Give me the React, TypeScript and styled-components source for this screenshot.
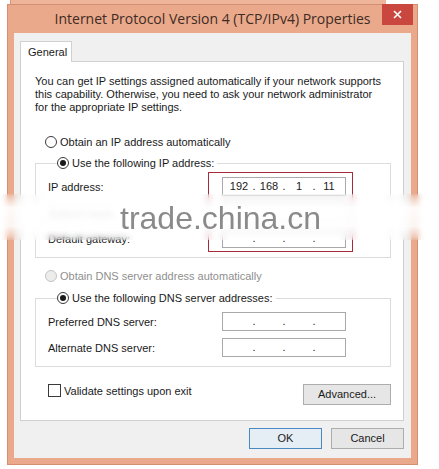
import styled, { createGlobalStyle } from "styled-components";

const GlobalStyle = createGlobalStyle`
  html, body {
    margin: 0;
    padding: 0;
    background: #ffffff;
  }
  body {
    font-family: "Liberation Sans", Arial, sans-serif;
    font-size: 11px;
    color: #1a1a1a;
  }
`;

type IpProps = {
  values?: string[];
};

const IpField: React.FC<IpProps> = ({ values = ["", "", "", ""] }) => {
  return (
    <Field>
      {values.map((v, i) => (
        <Segment key={`seg-${i}`}>
          <Octet>{v}</Octet>
          {i < 3 && <Dot>.</Dot>}
        </Segment>
      ))}
    </Field>
  );
};

type RadioProps = {
  checked?: boolean;
  disabled?: boolean;
  label: string;
};

const Radio: React.FC<RadioProps> = ({ checked, disabled, label }) => (
  <RadioRow $disabled={disabled}>
    <Circle $checked={checked} $disabled={disabled} />
    <span>{label}</span>
  </RadioRow>
);

const App = () => {
  return (
    <Page>
      <GlobalStyle />
      <BackWindow />
      <Window>
        <TitleBar>
          <span />
          <Title>Internet Protocol Version 4 (TCP/IPv4) Properties</Title>
          <CloseButton>
            <svg width="9" height="9" viewBox="0 0 9 9">
              <path d="M1 1 L8 8 M8 1 L1 8" stroke="#fff" strokeWidth="1.6" />
            </svg>
          </CloseButton>
        </TitleBar>

        <Client>
          <Tab>General</Tab>
          <Panel>
            <Description>
              You can get IP settings assigned automatically if your network supports
              <br />
              this capability. Otherwise, you need to ask your network administrator
              <br />
              for the appropriate IP settings.
            </Description>

            <AutoRow>
              <Radio label="Obtain an IP address automatically" />
            </AutoRow>

            <Group $top={5}>
              <Legend>
                <Radio checked label="Use the following IP address:" />
              </Legend>
              <FieldRow>
                <Label>IP address:</Label>
                <IpField values={["192", "168", "1", "11"]} />
              </FieldRow>
              <FieldRow>
                <Label>Subnet mask:</Label>
                <IpField />
              </FieldRow>
              <FieldRow>
                <Label>Default gateway:</Label>
                <IpField />
              </FieldRow>
            </Group>

            <AutoRow $top={10}>
              <Radio disabled label="Obtain DNS server address automatically" />
            </AutoRow>

            <Group $top={6}>
              <Legend>
                <Radio checked label="Use the following DNS server addresses:" />
              </Legend>
              <FieldRow>
                <Label>Preferred DNS server:</Label>
                <IpField />
              </FieldRow>
              <FieldRow>
                <Label>Alternate DNS server:</Label>
                <IpField />
              </FieldRow>
            </Group>

            <BottomRow>
              <CheckRow>
                <CheckBox />
                <span>Validate settings upon exit</span>
              </CheckRow>
              <Button $width={88}>Advanced...</Button>
            </BottomRow>
          </Panel>

          <Footer>
            <Button $width={73} $primary>
              OK
            </Button>
            <Button $width={73}>Cancel</Button>
          </Footer>
        </Client>
      </Window>

      <Highlight />
      <WatermarkBand />
      <Watermark>trade.china.cn</Watermark>
    </Page>
  );
};

export default App;

const Page = styled.div`
  position: relative;
  width: 439px;
  height: 469px;
  overflow: hidden;
`;

const BackWindow = styled.div`
  margin-left: 10px;
  width: 376px;
  height: 4px;
  box-sizing: border-box;
  background: #eeb59b;
  border-left: 1px solid #d8987b;
`;

const Window = styled.div`
  margin-left: 7px;
  width: 411px;
  height: 461px;
  box-sizing: border-box;
  display: flex;
  flex-direction: column;
  padding: 0 6px 6px;
  background: #eaa98b;
  border: 1px solid #d48e70;
`;

const TitleBar = styled.div`
  display: grid;
  grid-template-columns: 1fr auto 1fr;
  height: 28px;
`;

const Title = styled.div`
  font-family: "Open Sans", "Noto Sans", sans-serif;
  font-size: 14px;
  line-height: 27px;
  color: #3d2b24;
  white-space: nowrap;
`;

const CloseButton = styled.div`
  justify-self: end;
  display: flex;
  align-items: center;
  justify-content: center;
  width: 31px;
  height: 21px;
  margin-top: -1px;
  margin-right: -2px;
  background: #c9473f;
`;

const Client = styled.div`
  flex: 1;
  display: flex;
  flex-direction: column;
  padding: 8px 7px 0 6px;
  background: #f0f0f0;
`;

const Tab = styled.div`
  position: relative;
  z-index: 1;
  width: 52px;
  height: 21px;
  box-sizing: border-box;
  margin-bottom: -1px;
  padding-left: 7px;
  line-height: 20px;
  background: #ffffff;
  border: 1px solid #d0d0d0;
  border-bottom: none;
`;

const Panel = styled.div`
  height: 360px;
  box-sizing: border-box;
  display: flex;
  flex-direction: column;
  padding: 13px 12px 0 14px;
  background: #ffffff;
  border: 1px solid #d0d0d0;
`;

const Description = styled.div`
  line-height: 13px;
  white-space: nowrap;
`;

const AutoRow = styled.div<{ $top?: number }>`
  margin-top: ${(p) => p.$top ?? 20}px;
  padding-left: 10px;
`;

const RadioRow = styled.div<{ $disabled?: boolean }>`
  display: flex;
  align-items: center;
  gap: 3px;
  height: 16px;
  color: ${(p) => (p.$disabled ? "#8f8f8f" : "#1a1a1a")};
`;

const Circle = styled.span<{ $checked?: boolean; $disabled?: boolean }>`
  display: flex;
  align-items: center;
  justify-content: center;
  width: 12px;
  height: 12px;
  box-sizing: border-box;
  border-radius: 50%;
  border: 1px solid ${(p) => (p.$disabled ? "#c4c4c4" : "#3a3a3a")};
  background: ${(p) => (p.$disabled ? "#ececec" : "#ffffff")};

  &::after {
    content: "";
    display: ${(p) => (p.$checked ? "block" : "none")};
    width: 6px;
    height: 6px;
    border-radius: 50%;
    background: #1a1a1a;
  }
`;

const Group = styled.fieldset<{ $top: number }>`
  display: flex;
  flex-direction: column;
  gap: 7px;
  min-width: 0;
  margin: ${(p) => p.$top}px 0 0;
  padding: 6px 12px 9px;
  border: 1px solid #dcdcdc;
`;

const Legend = styled.legend`
  margin-left: 9px;
  padding: 0 3px 0 0;
`;

const FieldRow = styled.div`
  display: flex;
  align-items: center;
  height: 19px;
`;

const Label = styled.div`
  width: 174px;
`;

const Field = styled.div`
  display: flex;
  width: 124px;
  height: 19px;
  box-sizing: border-box;
  padding-left: 4px;
  border: 1px solid #a9a9a9;
  background: #ffffff;
  line-height: 17px;
`;

const Segment = styled.div`
  display: flex;
`;

const Octet = styled.span`
  width: 24px;
  text-align: center;
`;

const Dot = styled.span`
  width: 6px;
  text-align: center;
`;

const BottomRow = styled.div`
  display: flex;
  justify-content: space-between;
  align-items: flex-start;
  margin-top: 17px;
  padding-left: 13px;
`;

const CheckRow = styled.div`
  display: flex;
  align-items: center;
  gap: 3px;
  height: 13px;
`;

const CheckBox = styled.span`
  width: 13px;
  height: 13px;
  box-sizing: border-box;
  border: 1px solid #3a3a3a;
  background: #ffffff;
`;

const Button = styled.div<{ $width: number; $primary?: boolean }>`
  width: ${(p) => p.$width}px;
  height: 21px;
  box-sizing: border-box;
  line-height: 19px;
  text-align: center;
  color: #1a1a1a;
  background: ${(p) => (p.$primary ? "#e6eef5" : "#e6e6e6")};
  border: 1px solid ${(p) => (p.$primary ? "#4a8ac4" : "#adadad")};
`;

const Footer = styled.div`
  display: flex;
  justify-content: flex-end;
  gap: 9px;
  margin-top: 7px;
`;

const Highlight = styled.div`
  position: absolute;
  left: 208px;
  top: 172px;
  width: 145px;
  height: 80px;
  box-sizing: border-box;
  border: 1.5px solid #a52a3c;
`;

const WatermarkBand = styled.div`
  position: absolute;
  left: 0;
  top: 194px;
  width: 439px;
  height: 46px;
  background: linear-gradient(
    180deg,
    rgba(255, 255, 255, 0) 0%,
    rgba(255, 255, 255, 0.92) 30%,
    rgba(255, 255, 255, 0.85) 70%,
    rgba(255, 255, 255, 0) 100%
  );
  backdrop-filter: blur(3px);
`;

const Watermark = styled.div`
  position: absolute;
  left: 120px;
  top: 198px;
  font-family: "Liberation Sans", Arial, sans-serif;
  font-size: 32px;
  line-height: 40px;
  color: rgba(125, 125, 125, 0.9);
`;
